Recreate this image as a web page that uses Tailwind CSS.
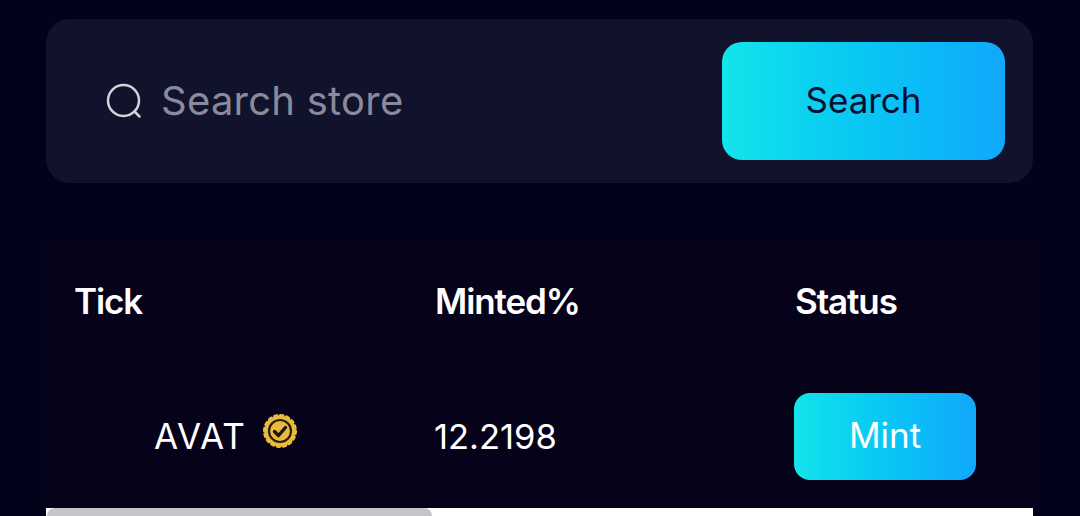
<!doctype html>
<html><head><meta charset="utf-8"><script src="https://cdn.jsdelivr.net/npm/@tailwindcss/browser@4"></script></head>
<body class="m-0">
<div class="w-[1080px] h-[516px] overflow-hidden bg-[#02021a] pl-[46px] pr-[47px] pt-[19px] flex flex-col font-['Inter',sans-serif]">
  <div class="h-[164px] rounded-[24px] bg-[#10132b] flex items-center pl-[60px] pr-[28px] shrink-0">
    <svg class="w-[36px] h-[36px] shrink-0" viewBox="0 0 36 36" fill="none" stroke="#d3d3dc" stroke-width="2.5" stroke-linecap="round"><circle cx="17.5" cy="17.5" r="15.5"/><path d="M28.5 28.5L33.5 33.5"/></svg>
    <span class="ml-[19px] text-[40px] tracking-[0.25px] leading-none text-[#8a8a9c]">Search store</span>
    <button class="ml-auto w-[283px] h-[118px] rounded-[20px] bg-gradient-to-r from-[#14e4ea] to-[#12a8fb] text-[35px] text-[#061031]"><span class="relative -top-[1px]">Search</span></button>
  </div>
  <div class="mt-[57px] flex-1 bg-[#06021a] flex flex-col">
    <div class="grid grid-cols-[361px_360px_1fr] pl-[28px] h-[153px] items-center pb-[31px] text-[35px] font-semibold tracking-[-1.1px] text-white">
      <span>Tick</span><span>Minted%</span><span>Status</span>
    </div>
    <div class="grid grid-cols-[361px_360px_1fr] pl-[28px] flex-1 items-start text-[35px] text-white">
      <div class="h-[87px] flex items-center pl-[80px]">
        <span class="tracking-[1.2px]">AVAT</span>
        <svg class="ml-[16px] mb-[12px] w-[36px] h-[36px]" viewBox="0 0 36 36"><circle cx="18" cy="18" r="15.5" fill="#e8ba3e"/><circle cx="18" cy="18" r="15.5" fill="none" stroke="#e8ba3e" stroke-width="3" stroke-linecap="round" stroke-dasharray="2.6 3.49"/><circle cx="18" cy="18" r="11" fill="#e8ba3e" stroke="#2a1d08" stroke-width="2.2"/><path d="M12.5 18.5l4 4 7-8" fill="none" stroke="#1c1405" stroke-width="3.4" stroke-linecap="round" stroke-linejoin="round"/></svg>
      </div>
      <div class="h-[87px] flex items-center -ml-[1px] text-[34.5px]">12.2198</div>
      <button class="w-[182px] h-[87px] -ml-[1px] rounded-[16px] bg-gradient-to-r from-[#14e4ea] to-[#12a8fb] text-[35px] text-white"><span class="relative -top-[1px]">Mint</span></button>
    </div>
    <div class="h-[8px] bg-white shrink-0 pl-[1px]"><div class="w-[385px] h-[8px] rounded-t-[8px] bg-[#c4c4c9]"></div></div>
  </div>
</div>
</body></html>
